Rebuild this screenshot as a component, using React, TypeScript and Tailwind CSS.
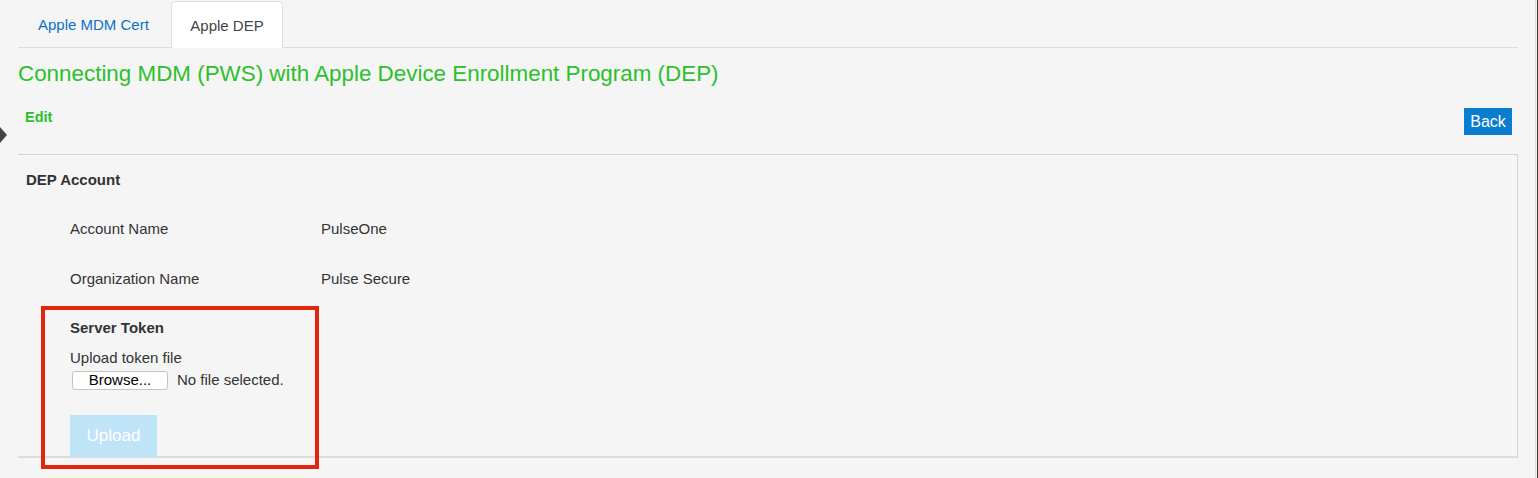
import React from "react";

export default function App() {
  return (
    <div
      className="relative w-[1538px] h-[478px] overflow-hidden bg-[#f5f5f5] text-[#333]"
      style={{ fontFamily: '"Liberation Sans", Arial, Helvetica, sans-serif' }}
    >
      {/* right window edge */}
      <div className="absolute right-0 top-0 h-full w-[3px] flex">
        <div className="w-px bg-[#dcdcdc]" />
        <div className="w-px bg-[#f5f5f5]" />
        <div className="w-px bg-[#3b3528]" />
      </div>
      {/* left collapse arrow */}
      <div className="absolute left-0 top-[127px] w-0 h-0 border-y-[8px] border-y-transparent border-l-[7px] border-l-[#444]" />

      <div className="ml-[18px] w-[1500px]">
        {/* Tabs */}
        <div className="flex h-[48px] items-end border-b border-[#dddddd]">
          <div className="h-[47px] w-[152px] flex items-center pt-[3px] pl-[20px] text-[15px] text-[#0a72c5]">
            Apple MDM Cert
          </div>
          <div className="h-[47px] -mb-px w-[112px] ml-px flex items-center justify-center pt-[3px] bg-white border border-b-0 border-[#dddddd] rounded-t-[5px] text-[15px] text-[#444]">
            Apple DEP
          </div>
        </div>

        {/* Title */}
        <div className="mt-[11px] h-[30px] leading-[30px] text-[22.4px] text-[#2cbf2c]">
          Connecting MDM (PWS) with Apple Device Enrollment Program (DEP)
        </div>

        {/* Edit / Back */}
        <div className="flex h-[65px] items-start justify-between">
          <div className="ml-[7px] mt-[20px] text-[14.5px] font-bold text-[#2cbf2c] leading-[16px]">Edit</div>
          <div className="mr-[6px] mt-[19px] h-[27px] w-[48px] bg-[#0b7dcf] text-white text-[16px] flex items-center justify-center">
            Back
          </div>
        </div>

        {/* Panel */}
        <div className="h-[304px] border-t border-r border-[#d4d4d4] border-b-2 border-b-[#dddddd]">
          <div className="ml-[8px] mt-[16px] h-[18px] leading-[18px] text-[15px] font-bold text-[#333]">DEP Account</div>

          <div className="ml-[52px] mt-[28px] flex h-[24px] items-center text-[15px]">
            <div className="w-[251px]">Account Name</div>
            <div>PulseOne</div>
          </div>
          <div className="ml-[52px] mt-[26px] flex h-[24px] items-center text-[15px]">
            <div className="w-[251px]">Organization Name</div>
            <div>Pulse Secure</div>
          </div>

          <div className="ml-[52px] mt-[28px] h-[18px] leading-[18px] text-[15px] font-bold">Server Token</div>
          <div className="ml-[52px] mt-[13px] h-[16px] leading-[16px] text-[15px]">Upload token file</div>
          <div className="ml-[54px] mt-[4px] flex items-center h-[20px]">
            <div className="h-[19px] w-[96px] bg-white border border-[#c4c4c4] rounded-[3px] flex items-center justify-center text-[15px] text-black">
              Browse...
            </div>
            <div className="ml-[9px] text-[15px]">No file selected.</div>
          </div>
          <div className="ml-[52px] mt-[25px] h-[42px] w-[87px] bg-[#bfe3f7] text-white text-[17px] flex items-center justify-center">
            Upload
          </div>
        </div>
      </div>

      {/* red highlight box */}
      <div className="absolute left-[41px] top-[306px] w-[278px] h-[163px] border-[4px] border-[#e1260c]" />
    </div>
  );
}
